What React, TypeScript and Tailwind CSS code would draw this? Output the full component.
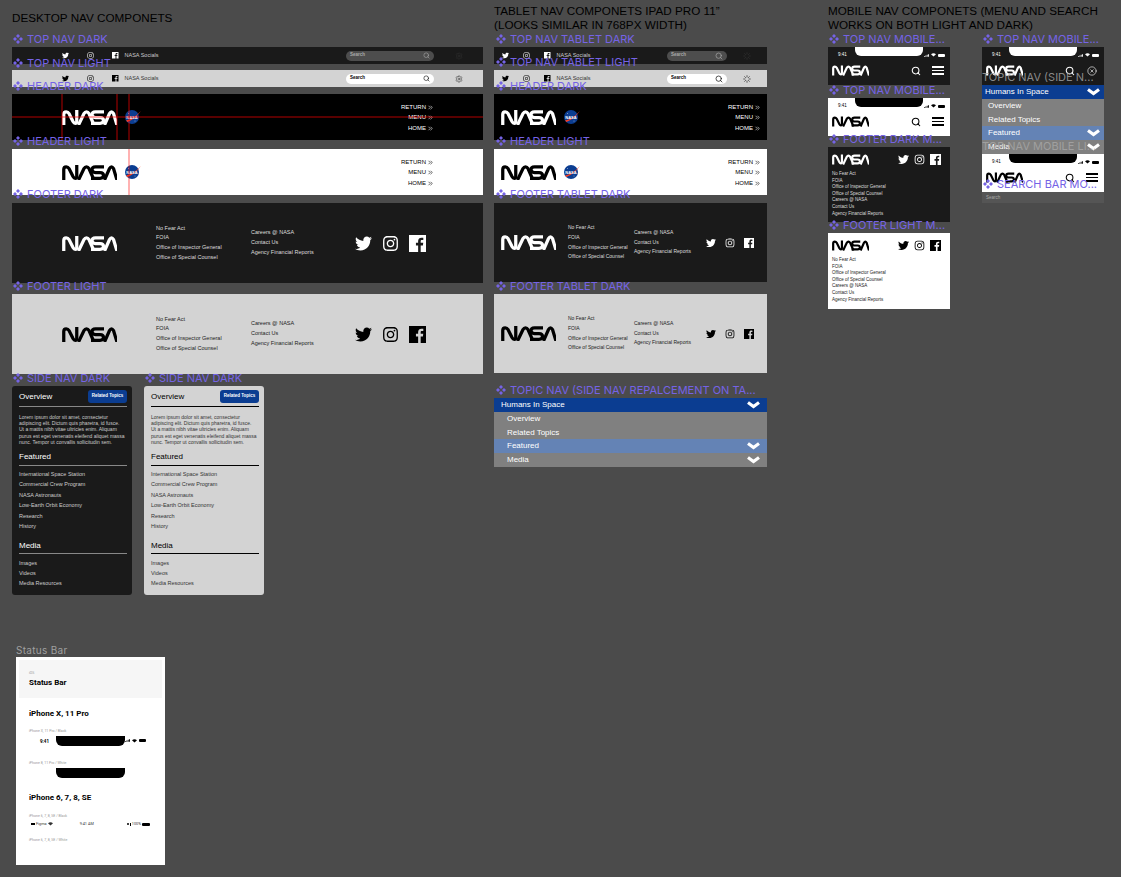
import { ChevronsRight, Search, Settings, Loader, CircleX } from "lucide-react";
import { FaTwitter, FaInstagram } from "react-icons/fa";

const labelFont = "font-['Inter',sans-serif]";
const bodyFont = "font-['Liberation_Sans',Arial,sans-serif]";

// NASA worm, drawn as one stroke per letter
function Worm({ className }: { className: string }) {
  return (
    <svg viewBox="0 0 110 30" className={className} fill="none" stroke="currentColor" strokeWidth="6.500">
      <path d="M3.500 30V9Q3.500 3.500 8.500 3.500Q12 3.500 14 7L22 23Q24 26.500 26.500 26.500Q29.500 26.500 29.500 23V0" />
      <path d="M33 30L44 7Q46 3.500 49 3.500Q52 3.500 54 7L64 30" />
      <path d="M84 3.500H67Q60 3.500 60 9.500Q60 15 67 15H76Q83 15 83 21Q83 26.500 76 26.500H58" />
      <path d="M85 30L95 7Q97 3.500 99 3.500Q101 3.500 103 7L110 30" />
    </svg>
  );
}

function Meatball({ className }: { className: string }) {
  return (
    <svg viewBox="0 0 32 28" className={className}>
      <circle cx="14" cy="14" r="14" fill="#0b3d91" />
      <circle cx="7" cy="7" r="0.8" fill="#fff" />
      <circle cx="20" cy="22" r="0.8" fill="#fff" />
      <circle cx="9" cy="21" r="0.6" fill="#fff" />
      <path d="M2 21Q16 19 32 2Q20 18 5 24Z" fill="#fc3d21" />
      <text x="14" y="17" textAnchor="middle" fontSize="8" fontWeight="700" fill="#fff" fontFamily="Liberation Sans, sans-serif">
        NASA
      </text>
    </svg>
  );
}

function Fb({ className }: { className: string }) {
  return (
    <svg viewBox="0 0 24 24" className={className} fill="currentColor">
      <path d="M0 0H24V24H16.500V14.700H19.600L20.100 11.100H16.500V8.800C16.500 7.800 16.800 7.100 18.300 7.100H20.200V3.900C19.900 3.900 18.800 3.800 17.500 3.800C14.800 3.800 12.900 5.400 12.900 8.500V11.100H9.800V14.700H12.900V24H0Z" />
    </svg>
  );
}

function Menu({ className }: { className: string }) {
  return (
    <div className={`flex flex-col gap-[2px] ${className}`}>
      <div className="h-[1.500px] bg-current" />
      <div className="h-[1.500px] bg-current" />
      <div className="h-[1.500px] bg-current" />
    </div>
  );
}

function Down({ className }: { className: string }) {
  return (
    <svg viewBox="0 0 13 8" className={className} fill="none" stroke="currentColor" strokeWidth="3.200">
      <path d="M1 1.500L6.500 5.500L12 1.500" />
    </svg>
  );
}

function Wifi() {
  return (
    <svg viewBox="0 0 10 7" className="h-[3.500px] w-[5px]" fill="currentColor">
      <path d="M0 2.500Q5 -1.500 10 2.500L5 7Z" />
    </svg>
  );
}

function Label({ pos, text }: { pos: string; text: string }) {
  return (
    <div className={`absolute z-10 flex items-center gap-[4px] whitespace-nowrap text-[11px] leading-[14px] text-[#7563e6] ${labelFont} ${pos}`}>
      <svg viewBox="0 0 10 10" className="h-[10px] w-[10px] shrink-0" fill="currentColor">
        <path d="M5 0L7 2L5 4L3 2ZM2 3L4 5L2 7L0 5ZM8 3L10 5L8 7L6 5ZM5 6L7 8L5 10L3 8Z" />
      </svg>
      <span>{text}</span>
    </div>
  );
}

function TopNav({ pos, light, tablet }: { pos: string; light?: boolean; tablet?: boolean }) {
  const c = light ? "bg-[#d3d3d3] text-black" : "bg-[#1a1a1a] text-white";
  const gear = light ? "text-[#222]" : "text-[#333]";
  return (
    <div className={`absolute flex h-[17px] items-center ${c} ${pos} ${tablet ? "w-[273px] pl-[8px] pr-[16px]" : "w-[471px] pl-[50px] pr-[20px]"}`}>
      <div className={`flex items-center ${tablet ? "gap-[14px]" : "gap-[18px]"}`}>
        <FaTwitter className="h-[7px] w-[7px]" />
        <FaInstagram className="h-[7px] w-[7px]" />
        <Fb className="h-[6.500px] w-[6.500px]" />
      </div>
      <span className={`ml-[6px] whitespace-nowrap text-[5.500px] ${light ? "text-[#333]" : "text-[#ccc]"} ${bodyFont}`}>NASA Socials</span>
      <div
        className={`ml-auto flex h-[10px] items-center justify-between rounded-full px-[4px] ${bodyFont} ${light ? "bg-white text-black" : "bg-[#4d4d4d] text-[#aaa]"} ${tablet ? "w-[60px]" : "w-[88px]"}`}
      >
        <span className="text-[4.500px] font-bold">Search</span>
        <Search className={tablet ? "h-[8px] w-[8px]" : "h-[7px] w-[7px]"} />
      </div>
      {tablet ? (
        <Loader className={`ml-[16px] h-[8px] w-[8px] ${gear}`} />
      ) : (
        <Settings strokeWidth={1.500} className={`ml-[21px] h-[8px] w-[8px] ${gear}`} />
      )}
    </div>
  );
}

function Header({ pos, light, tablet, guides }: { pos: string; light?: boolean; tablet?: boolean; guides?: boolean }) {
  const c = light ? "bg-white text-black" : "bg-black text-white";
  return (
    <div className={`absolute flex h-[46px] items-center ${c} ${pos} ${tablet ? "w-[273px] pl-[7px] pr-[6px]" : "w-[471px] pl-[50px] pr-[49px]"}`}>
      <Worm className="h-[15px] w-[55px]" />
      <Meatball className="ml-[8px] h-[14px] w-[16px]" />
      <div className={`ml-auto flex flex-col items-end gap-[2px] pt-[1px] text-[6px] leading-[8.500px] ${bodyFont}`}>
        <div className="flex items-center">RETURN<ChevronsRight className="ml-[1px] h-[7px] w-[7px]" /></div>
        <div className="flex items-center">MENU<ChevronsRight className="ml-[1px] h-[7px] w-[7px]" /></div>
        <div className="flex items-center">HOME<ChevronsRight className="ml-[1px] h-[7px] w-[7px]" /></div>
      </div>
      {guides && <div className="absolute inset-x-0 top-[22px] h-[2px] bg-[#ff0000]/35" />}
      {guides && <div className="absolute inset-y-0 left-[49px] w-[2px] bg-[#ff0000]/35" />}
      {guides && <div className="absolute inset-y-0 left-[104px] w-[2px] bg-[#ff0000]/35" />}
      {guides && <div className="absolute inset-y-0 left-[116px] w-[2px] bg-[#ff0000]/35" />}
      {light && !tablet && <div className="absolute inset-y-0 left-[116px] w-[2px] bg-[#ff0000]/30" />}
    </div>
  );
}

function Footer({ pos, light, tablet }: { pos: string; light?: boolean; tablet?: boolean }) {
  const c = light ? "bg-[#d3d3d3] text-black" : "bg-[#1a1a1a] text-white";
  const txt = light ? "text-[#222]" : "text-[#ddd]";
  const size = tablet ? "text-[5px] leading-[9.700px]" : "text-[5.500px] leading-[9.700px]";
  const icon = tablet ? "h-[10px] w-[10px]" : "h-[17px] w-[17px]";
  return (
    <div className={`absolute flex items-center ${c} ${pos} ${tablet ? "h-[79px] w-[273px] pl-[7px]" : "h-[80px] w-[471px] pl-[50px]"}`}>
      <Worm className="h-[15px] w-[55px] shrink-0" />
      <div className={`${tablet ? "ml-[12px] w-[66px]" : "ml-[39px] w-[95px]"} whitespace-nowrap ${size} ${txt} ${bodyFont}`}>
        <div>No Fear Act</div>
        <div>FOIA</div>
        <div>Office of Inspector General</div>
        <div>Office of Special Counsel</div>
      </div>
      <div className={`whitespace-nowrap ${size} ${txt} ${bodyFont} ${tablet ? "w-[72px]" : "w-[104px]"}`}>
        <div>Careers @ NASA</div>
        <div>Contact Us</div>
        <div>Agency Financial Reports</div>
      </div>
      <div className={`flex items-center ${tablet ? "gap-[9px]" : "gap-[10px]"}`}>
        <FaTwitter className={icon} />
        <FaInstagram className={icon} />
        <Fb className={icon} />
      </div>
    </div>
  );
}

function SideNav({ pos, light }: { pos: string; light?: boolean }) {
  const c = light ? "bg-[#d3d3d3] text-black" : "bg-[#1a1a1a] text-white";
  const rule = light ? "bg-black" : "bg-[#888]";
  const txt = light ? "text-[#333]" : "text-[#ccc]";
  return (
    <div className={`absolute h-[209px] w-[120px] rounded-[3px] pl-[7px] pr-[5px] pt-[3px] ${c} ${bodyFont} ${pos}`}>
      <div className="flex items-center justify-between">
        <span className="pt-[2px] text-[8px]">Overview</span>
        <span className="flex h-[13px] w-[39px] items-center justify-center rounded-[3px] bg-[#0b3d91] text-[4.500px] font-bold whitespace-nowrap text-white">Related Topics</span>
      </div>
      <div className={`mt-[3px] h-[1px] ${rule}`} />
      <p className={`mt-[7px] text-[5px] leading-[6.200px] whitespace-nowrap ${txt}`}>
        Lorem ipsum dolor sit amet, consectetur<br />
        adipiscing elit. Dictum quis pharetra, id fusce.<br />
        Ut a mattis nibh vitae ultricies enim. Aliquam<br />
        purus est eget venenatis eleifend aliquet massa<br />
        nunc. Tempor ut convallis sollicitudin sem.
      </p>
      <div className="mt-[5.500px] text-[8px] leading-[11px]">Featured</div>
      <div className={`mt-[3px] h-[1px] ${rule}`} />
      <div className={`mt-[3.500px] text-[5.500px] leading-[10.400px] whitespace-nowrap ${txt}`}>
        <div>International Space Station</div>
        <div>Commercial Crew Program</div>
        <div>NASA Astronauts</div>
        <div>Low-Earth Orbit Economy</div>
        <div>Research</div>
        <div>History</div>
      </div>
      <div className="mt-[9px] text-[8px] leading-[11px]">Media</div>
      <div className={`mt-[2px] h-[1px] ${rule}`} />
      <div className={`mt-[4.500px] text-[5.500px] leading-[9.800px] whitespace-nowrap ${txt}`}>
        <div>Images</div>
        <div>Videos</div>
        <div>Media Resources</div>
      </div>
    </div>
  );
}

function TopicNav({ pos, compact }: { pos: string; compact?: boolean }) {
  const top = compact ? "pl-[3px] pr-[4px]" : "pl-[7px] pr-[7px]";
  const row = compact ? "pl-[6px] pr-[4px]" : "pl-[13px] pr-[7px]";
  return (
    <div className={`absolute text-[8px] leading-[13.750px] text-white ${bodyFont} ${pos} ${compact ? "w-[122px]" : "w-[273px]"}`}>
      <div className={`flex items-center justify-between bg-[#0b3d91] ${top}`}>
        Humans In Space
        <Down className="h-[8px] w-[13px]" />
      </div>
      <div className={`bg-[#808080] ${row}`}>Overview</div>
      <div className={`bg-[#808080] ${row}`}>Related Topics</div>
      <div className={`flex items-center justify-between bg-[#6483b5] ${row}`}>
        Featured
        <Down className="h-[8px] w-[13px]" />
      </div>
      <div className={`flex items-center justify-between bg-[#808080] ${row}`}>
        Media
        <Down className="h-[8px] w-[13px]" />
      </div>
    </div>
  );
}

function StatusIcons({ dark }: { dark?: boolean }) {
  return (
    <div className={`flex items-center gap-[2px] ${dark ? "text-white" : "text-black"}`}>
      <svg viewBox="0 0 11 6" className="h-[3px] w-[5px]" fill="currentColor">
        <path d="M0 4h2v2H0zM3 3h2v3H3zM6 1.500h2V6H6zM9 0h2v6H9z" />
      </svg>
      <Wifi />
      <div className="h-[3px] w-[7px] rounded-[1px] bg-current" />
    </div>
  );
}

function MobileNav({ pos, light, close }: { pos: string; light?: boolean; close?: boolean }) {
  const c = light ? "bg-white text-black" : "bg-[#1a1a1a] text-white";
  return (
    <div className={`absolute h-[38px] w-[122px] ${c} ${pos}`}>
      <div className={`absolute left-[27px] top-0 h-[9px] w-[68px] rounded-b-[6px] ${light ? "bg-black" : "bg-white"}`} />
      <div className="flex h-[15px] items-center justify-between pl-[10px] pr-[5px] pt-[1px]">
        <span className={`text-[4.500px] ${bodyFont}`}>9:41</span>
        <StatusIcons dark={!light} />
      </div>
      <div className="flex items-center pl-[4px] pr-[6px] pt-[3px]">
        <Worm className="h-[11px] w-[37px]" />
        <Search strokeWidth={2.500} className="ml-auto h-[10px] w-[10px]" />
        {close ? (
          <CircleX strokeWidth={1.500} className="ml-[12px] mr-[1px] h-[10px] w-[10px]" />
        ) : (
          <Menu className="ml-[11px] w-[12px]" />
        )}
      </div>
    </div>
  );
}

function MobileFooter({ pos, light, height }: { pos: string; light?: boolean; height: string }) {
  const c = light ? "bg-white text-black" : "bg-[#1a1a1a] text-white";
  return (
    <div className={`absolute w-[122px] px-[4px] pt-[7px] ${c} ${pos} ${height}`}>
      <div className="flex items-center">
        <Worm className="h-[11px] w-[37px]" />
        <FaTwitter className="ml-auto h-[11px] w-[11px]" />
        <FaInstagram className="ml-[5px] h-[11px] w-[11px]" />
        <Fb className="ml-[5px] mr-[5px] h-[11px] w-[11px]" />
      </div>
      <div className={`mt-[6px] text-[4.500px] leading-[6.600px] whitespace-nowrap ${bodyFont} ${light ? "text-[#222]" : "text-[#ddd]"}`}>
        <div>No Fear Act</div>
        <div>FOIA</div>
        <div>Office of Inspector General</div>
        <div>Office of Special Counsel</div>
        <div>Careers @ NASA</div>
        <div>Contact Us</div>
        <div>Agency Financial Reports</div>
      </div>
    </div>
  );
}

function StatusBarFrame() {
  const cap = "text-[3.500px] leading-[5px] text-[#999]";
  return (
    <div className="absolute left-[16px] top-[657px] h-[208px] w-[149px] bg-white font-['Roboto',sans-serif] text-black">
      <div className="mx-[3px] mt-[3px] h-[38px] bg-[#f6f6f6] pl-[10px] pt-[11px]">
        <div className={cap}>iOS</div>
        <div className="mt-[2px] text-[8px] leading-[10px] font-bold">Status Bar</div>
      </div>
      <div className="pl-[13px]">
        <div className="mt-[10.500px] text-[8px] leading-[10px] font-bold">iPhone X, 11 Pro</div>
        <div className={`mt-[10px] ${cap}`}>iPhone X, 11 Pro / Black</div>
        <div className="relative mt-[2.500px] h-[10px]">
          <div className="absolute left-[27px] top-0 h-[10px] w-[69px] rounded-b-[6px] bg-black" />
          <span className="absolute left-[11px] top-[3px] text-[4.500px] leading-[5px] font-bold">9:41</span>
          <div className="absolute left-[96px] top-[3px]"><StatusIcons /></div>
        </div>
        <div className={`mt-[14.500px] ${cap}`}>iPhone 8, 11 Pro / White</div>
        <div className="relative mt-[2.500px] h-[10px]">
          <div className="absolute left-[27px] top-0 h-[10px] w-[69px] rounded-b-[6px] bg-black" />
        </div>
        <div className="mt-[15px] text-[8px] leading-[10px] font-bold">iPhone 6, 7, 8, SE</div>
        <div className={`mt-[10.500px] ${cap}`}>iPhone 6, 7, 8, SE / Black</div>
        <div className="mt-[1.500px] flex h-[8px] w-[121px] items-center justify-between text-[3.800px] text-[#333]">
          <span className="ml-[2px] flex items-center gap-[1px]">
            <span className="h-[2px] w-[4px] bg-black" />
            Figma
            <Wifi />
          </span>
          <span className="ml-[-6px]">9:41 AM</span>
          <span className="flex items-center gap-[1px]">
            <span className="h-[2px] w-[2px] rounded-full bg-black" />
            <span className="h-[3px] w-[1px] bg-black" />
            100%
            <span className="h-[3px] w-[8px] rounded-[1px] bg-black" />
          </span>
        </div>
        <div className={`mt-[9.500px] ${cap}`}>iPhone 6, 7, 8, SE / White</div>
      </div>
    </div>
  );
}

export default function App() {
  const heading = `absolute text-[11.700px] leading-[14px] text-black ${bodyFont}`;
  return (
    <div className="relative h-[877px] w-[1121px] overflow-hidden bg-[#4b4b4b]">
      <div className={`${heading} left-[12px] top-[11px] whitespace-nowrap`}>DESKTOP NAV COMPONETS</div>
      <div className={`${heading} left-[494px] top-[4px] w-[260px]`}>TABLET NAV COMPONETS IPAD PRO 11”<br />(LOOKS SIMILAR IN 768PX WIDTH)</div>
      <div className={`${heading} left-[828px] top-[4px] w-[290px]`}>MOBILE NAV COMPONETS (MENU AND SEARCH<br />WORKS ON BOTH LIGHT AND DARK)</div>

      {/* desktop */}
      <TopNav pos="left-[12px] top-[47px]" />
      <TopNav pos="left-[12px] top-[70px]" light />
      <Header pos="left-[12px] top-[94px]" guides />
      <Header pos="left-[12px] top-[149px]" light />
      <Footer pos="left-[12px] top-[203px]" />
      <Footer pos="left-[12px] top-[294px]" light />
      <SideNav pos="left-[12px] top-[386px]" />
      <SideNav pos="left-[144px] top-[386px]" light />

      {/* tablet */}
      <TopNav pos="left-[494px] top-[47px]" tablet />
      <TopNav pos="left-[494px] top-[70px]" light tablet />
      <Header pos="left-[494px] top-[94px]" tablet />
      <Header pos="left-[494px] top-[149px]" light tablet />
      <Footer pos="left-[494px] top-[203px]" tablet />
      <Footer pos="left-[494px] top-[294px]" light tablet />
      <TopicNav pos="left-[494px] top-[398px]" />

      {/* mobile */}
      <MobileNav pos="left-[828px] top-[47px]" />
      <MobileNav pos="left-[828px] top-[98px]" light />
      <MobileFooter pos="left-[828px] top-[147px]" height="h-[75px]" />
      <MobileFooter pos="left-[828px] top-[233px]" light height="h-[76px]" />
      <MobileNav pos="left-[982px] top-[47px]" close />
      <TopicNav pos="left-[982px] top-[85px]" compact />
      <MobileNav pos="left-[982px] top-[154px]" light />
      <div className={`absolute left-[982px] top-[192px] h-[11px] w-[122px] bg-[#555] pl-[4px] text-[4.500px] leading-[11px] text-[#aaa] ${bodyFont}`}>Search</div>

      <div className={`absolute left-[16px] top-[644px] text-[10px] leading-[12px] tracking-[0.3px] text-[#a0a0a0] ${labelFont}`}>Status Bar</div>
      <StatusBarFrame />

      {/* component labels sit on top of the frames, like in the editor */}
      <Label pos="left-[13px] top-[32px]" text="TOP NAV DARK" />
      <Label pos="left-[13px] top-[56px]" text="TOP NAV LIGHT" />
      <Label pos="left-[13px] top-[79px]" text="HEADER DARK" />
      <Label pos="left-[13px] top-[134px]" text="HEADER LIGHT" />
      <Label pos="left-[13px] top-[187px]" text="FOOTER DARK" />
      <Label pos="left-[13px] top-[279px]" text="FOOTER LIGHT" />
      <Label pos="left-[13px] top-[371px]" text="SIDE NAV DARK" />
      <Label pos="left-[145px] top-[371px]" text="SIDE NAV DARK" />

      <Label pos="left-[496px] top-[32px]" text="TOP NAV TABLET DARK" />
      <Label pos="left-[496px] top-[55px]" text="TOP NAV TABLET LIGHT" />
      <Label pos="left-[496px] top-[79px]" text="HEADER DARK" />
      <Label pos="left-[496px] top-[134px]" text="HEADER LIGHT" />
      <Label pos="left-[496px] top-[187px]" text="FOOTER TABLET DARK" />
      <Label pos="left-[496px] top-[279px]" text="FOOTER TABLET DARK" />
      <Label pos="left-[496px] top-[383px]" text="TOPIC NAV (SIDE NAV REPALCEMENT ON TA..." />

      <Label pos="left-[829px] top-[32px]" text="TOP NAV MOBILE..." />
      <Label pos="left-[829px] top-[83px]" text="TOP NAV MOBILE..." />
      <Label pos="left-[829px] top-[132px]" text="FOOTER DARK M..." />
      <Label pos="left-[829px] top-[218px]" text="FOOTER LIGHT M..." />
      <Label pos="left-[983px] top-[32px]" text="TOP NAV MOBILE..." />
      <Label pos="left-[983px] top-[177px]" text="SEARCH BAR MO..." />
      <div className={`absolute left-[982px] top-[70px] z-10 whitespace-nowrap text-[11px] leading-[14px] text-[#a8a8a8]/80 ${labelFont}`}>TOPIC NAV (SIDE N...</div>
      <div className={`absolute left-[982px] top-[139px] z-10 whitespace-nowrap text-[11px] leading-[14px] text-[#a8a8a8]/80 ${labelFont}`}>TOP NAV MOBILE LI...</div>
    </div>
  );
}
